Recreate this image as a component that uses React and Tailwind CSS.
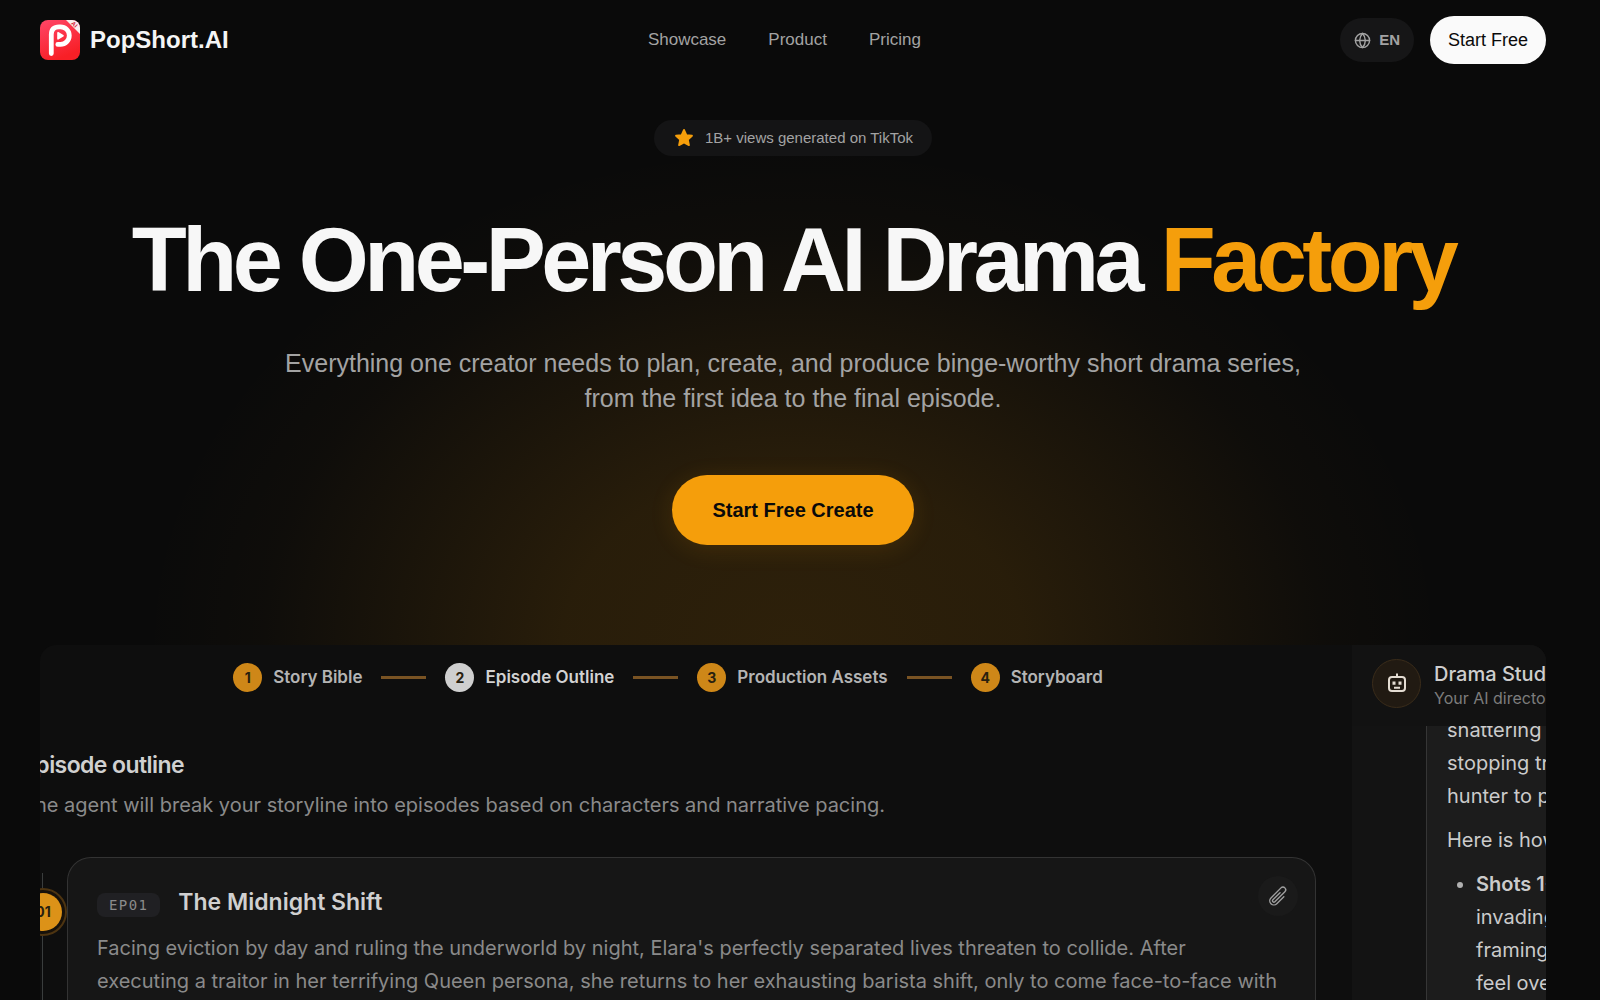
import React from "react";
import { Globe } from "lucide-react";
import { HiOutlinePaperClip } from "react-icons/hi2";

const navLinks = ["Showcase", "Product", "Pricing"];

const steps = [
    { id: 1, label: "Story Bible" },
    { id: 2, label: "Episode Outline", active: true },
    { id: 3, label: "Production Assets" },
    { id: 4, label: "Storyboard" },
];

const Logo = () => (
    <svg viewBox="0 0 40 40" className="size-10 shrink-0" aria-hidden="true">
        <defs>
            <linearGradient id="logoFill" x1="0" y1="0" x2="0.4" y2="1">
                <stop offset="0" stopColor="#ff4668" />
                <stop offset="1" stopColor="#f81f26" />
            </linearGradient>
            <clipPath id="logoClip">
                <rect width="40" height="40" rx="8" />
            </clipPath>
        </defs>
        <g clipPath="url(#logoClip)">
            <rect width="40" height="40" fill="url(#logoFill)" />
            <path d="M26 0H40V14Z" fill="#f7efef" />
            <path
                d="M11.3 33.5V14.5Q11.3 6.8 19 6.8H20.5A8.8 8.8 0 0 1 20.5 24.4H17.8"
                fill="none"
                stroke="#fff"
                strokeWidth="4.8"
                strokeLinecap="round"
                strokeLinejoin="round"
            />
            <path
                d="M18 12.8L23 15.8L18 18.8Z"
                fill="#fff"
                stroke="#fff"
                strokeWidth="1.6"
                strokeLinejoin="round"
            />
            <text
                x="31.5"
                y="6"
                fontSize="6"
                fontWeight="700"
                fill="#d8283c"
                transform="rotate(45 34 4)"
            >
                AI
            </text>
        </g>
    </svg>
);

const Star = () => (
    <svg viewBox="0 0 24 24" className="size-[22px]" aria-hidden="true">
        <path
            d="M12 3.2l2.6 5.6 6.1.7-4.5 4.2 1.2 6.1L12 16.8l-5.4 3 1.2-6.1-4.5-4.2 6.1-.7z"
            fill="#f59e0b"
            stroke="#f59e0b"
            strokeWidth="2"
            strokeLinejoin="round"
        />
    </svg>
);

const Robot = () => (
    <svg
        viewBox="0 0 24 24"
        className="size-6"
        fill="none"
        stroke="#e4dcd2"
        strokeWidth="2"
        strokeLinejoin="round"
        aria-hidden="true"
    >
        <path d="M12 1.5V5" />
        <rect x="4" y="5" width="16" height="14" rx="3" />
        <path d="M7.5 11.2h3M13.5 11.2h3" strokeWidth="3.2" />
        <path d="M9 15.8h6" />
    </svg>
);

const Header = () => (
    <header className="flex items-center justify-between px-10 h-20">
        <a href="#" className="flex items-center gap-[10px]">
            <Logo />
            <span className="text-2xl font-bold text-neutral-100">PopShort.AI</span>
        </a>
        <nav className="flex gap-[42px] text-[17px] text-[#a3a3a3]">
            {navLinks.map((link) => (
                <a key={link} href={`#${link.toLowerCase()}`}>
                    {link}
                </a>
            ))}
        </nav>
        <div className="flex items-center gap-4">
            <button className="flex items-center gap-2 h-11 px-[14px] rounded-full bg-[#161617] text-[15px] font-bold text-[#a3a3a3]">
                <Globe size={17} strokeWidth={2} />
                EN
            </button>
            <button className="h-12 px-[18px] rounded-full bg-[#fafafa] text-[18px] text-neutral-950">
                Start Free
            </button>
        </div>
    </header>
);

const Hero = () => (
    <section className="flex flex-col items-center pt-10 pb-[100px] px-10 text-center">
        <div className="flex items-center gap-[10px] h-9 px-[19px] rounded-full bg-[#141415] text-[15px] text-[#a3a3a3]">
            <Star />
            1B+ views generated on TikTok
        </div>
        <h1 className="mt-[55px] text-[90px] leading-[99px] font-bold tracking-tighter text-[#f7f7f7]">
            The One-Person AI Drama <span className="text-[#f59e0b]">Factory</span>
        </h1>
        <p className="mt-9 max-w-[1056px] text-[25px] leading-[35px] text-[#a3a3a3]">
            Everything one creator needs to plan, create, and produce binge-worthy short
            drama series, from the first idea to the final episode.
        </p>
        <button className="mt-[59px] h-[70px] px-10 rounded-full bg-[#f59e0b] text-[20px] font-bold text-neutral-950 shadow-[0_4px_24px_rgba(245,158,11,0.12)]">
            Start Free Create
        </button>
    </section>
);

const Stepper = () => (
    <ol className="flex items-center justify-center gap-[19px] pt-[18px] pr-14 text-[17px] font-semibold">
        {steps.map((step, i) => (
            <li key={step.id} className="flex items-center gap-[19px]">
                {i > 0 && <span className="w-[45px] h-[3px] bg-[#795323]" />}
                <span className="flex items-center gap-[11px]">
                    <span
                        className={`flex items-center justify-center size-[29px] rounded-full text-sm font-bold text-[#28200f] ${
                            step.active ? "bg-[#cfcfcf]" : "bg-[#ce8718]"
                        }`}
                    >
                        {step.id}
                    </span>
                    <span className={step.active ? "text-[#d2d2d2]" : "text-[#b4b4b4]"}>
                        {step.label}
                    </span>
                </span>
            </li>
        ))}
    </ol>
);

const EpisodeCard = () => (
    <article className="grow rounded-t-3xl border border-b-0 border-[#333] bg-[#161616] px-[29px] pt-[27px]">
        <div className="flex items-center">
            <span className="mt-[6px] px-3 rounded-lg bg-[#202023] font-['DejaVu_Sans_Mono','Liberation_Mono',monospace] text-sm leading-6 tracking-widest text-[#8b8b8b]">
                EP01
            </span>
            <h3 className="ml-[18px] text-[23px] font-semibold text-[#d0d0d0]">
                The Midnight Shift
            </h3>
            <button
                aria-label="Attach file"
                className="ml-auto -mt-3 -mr-3 flex items-center justify-center size-10 rounded-full bg-[#1a1a1a] text-[#a0a0a0]"
            >
                <HiOutlinePaperClip size={22} />
            </button>
        </div>
        <p className="mt-3 text-[20px] leading-[33px] text-[#8a8a8a]">
            Facing eviction by day and ruling the underworld by night, Elara's perfectly
            separated lives threaten to collide. After
            <br />
            executing a traitor in her terrifying Queen persona, she returns to her
            exhausting barista shift, only to come face-to-face with
        </p>
    </article>
);

const Outline = () => (
    <div className="grow min-w-0 overflow-hidden bg-[#0e0e0e]">
        <Stepper />
        <div className="-ml-[18px] mt-[57px] whitespace-nowrap">
            <h2 className="text-[23px] leading-8 font-semibold tracking-tight text-[#d0d0d0]">
                Episode outline
            </h2>
            <p className="mt-2 text-[20px] leading-8 text-[#8a8a8a]">
                The agent will break your storyline into episodes based on characters and
                narrative pacing.
            </p>
        </div>
        <div className="flex -ml-[21px] mt-9 pr-9 h-60">
            <div className="relative w-12 shrink-0">
                <span className="absolute left-[23px] top-4 bottom-0 w-px bg-[#3a3d3d]" />
                <span className="absolute right-0 top-[31px] flex items-center justify-center size-12 rounded-full border-2 border-[#4d3411] bg-[#17110a] p-[3px]">
                    <span className="flex items-center justify-center size-full rounded-full bg-[#dc9218] text-sm font-bold text-[#28200f]">
                        01
                    </span>
                </span>
            </div>
            <EpisodeCard />
        </div>
    </div>
);

const Chat = () => (
    <aside className="w-[194px] shrink-0 overflow-hidden whitespace-nowrap bg-[#131313]">
        <div className="relative flex items-center gap-[13px] h-[81px] pl-5 pb-1 bg-[#121212]">
            <span className="flex items-center justify-center size-[49px] shrink-0 rounded-full border border-[#3a2c1a] bg-[#211a12]">
                <Robot />
            </span>
            <div className="pt-1">
                <div className="text-[20px] leading-6 font-medium text-[#cecece]">
                    Drama Studio
                </div>
                <div className="text-base leading-6 text-[#7d7d7d]">Your AI director</div>
            </div>
        </div>
        <div className="ml-[74px] h-80 border-l border-[#363636] bg-[#1c1c1c] pl-5 text-[20px] leading-[33px] text-[#cbcbcb]">
            <p className="-mt-3">
                shattering
                <br />
                stopping traffic
                <br />
                hunter to prey
            </p>
            <p className="mt-[11px]">Here is how</p>
            <ul className="mt-[11px] ml-[29px] list-disc marker:text-[#b0b0b0]">
                <li>
                    <strong className="font-semibold">Shots 1-3</strong>
                    <br />
                    invading
                    <br />
                    framing
                    <br />
                    feel overt
                </li>
            </ul>
        </div>
    </aside>
);

const App = () => {
    return (
        <div className="h-screen overflow-hidden bg-[#0a0a0a] pr-[14px] font-['Liberation_Sans',Arial,sans-serif]">
            <div className="bg-[radial-gradient(650px_500px_at_50%_100%,rgba(245,158,11,0.15),rgba(245,158,11,0.13)_35%,rgba(245,158,11,0.07)_60%,rgba(245,158,11,0.02)_82%,transparent)]">
                <Header />
                <Hero />
            </div>
            <div className="mx-10 flex overflow-hidden rounded-t-2xl font-['Inter',sans-serif]">
                <Outline />
                <Chat />
            </div>
        </div>
    );
};

export default App;
